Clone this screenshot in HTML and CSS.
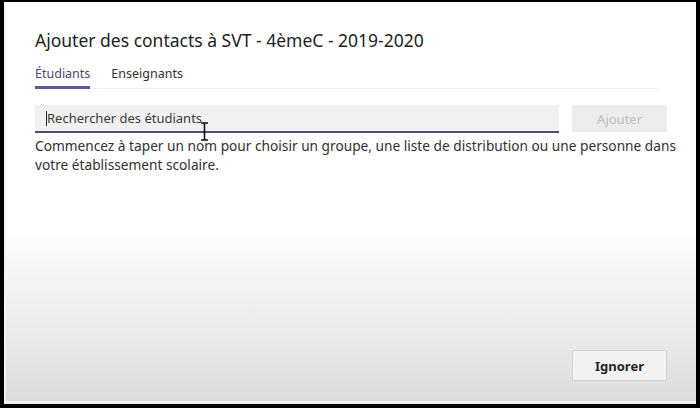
FILE: index.html
```html
<!DOCTYPE html>
<html lang="fr">
<head>
    <meta charset="UTF-8">
    <title>Ajouter des contacts</title>
    <link rel="stylesheet" href="styles.css">
</head>
<body>
    <div class="frame">
        <div class="dialog">
            <h2 class="title">Ajouter des contacts à SVT - 4èmeC - 2019-2020</h2>

            <div class="tabs">
                <span class="tab active">Étudiants</span>
                <span class="tab">Enseignants</span>
            </div>

            <div class="search-row">
                <div class="search">
                    <span class="caret"></span>
                    <span class="placeholder">Rechercher des étudiants</span>
                    <svg class="ibeam" width="9" height="19" viewBox="0 0 9 19">
                        <path d="M1 1h3l0.5 0.5L5 1h3M4.5 1.5v16M1 18h3l0.5-0.5L5 18h3" fill="none" stroke="#111" stroke-width="1.6"/>
                    </svg>
                </div>
                <button class="add" disabled>Ajouter</button>
            </div>

            <p class="hint">Commencez à taper un nom pour choisir un groupe, une liste de distribution ou une personne dans votre établissement scolaire.</p>

            <div class="footer">
                <button class="ignore">Ignorer</button>
            </div>
        </div>
    </div>
</body>
</html>
```

FILE: styles.css
```css
html, body {
    margin: 0;
    padding: 0;
    width: 700px;
    height: 408px;
    overflow: hidden;
    background-color: #000;
}

body {
    font-family: "Noto Sans", "Open Sans", sans-serif;
    color: #252423;
}

.frame {
    box-sizing: border-box;
    width: 700px;
    height: 408px;
    padding: 2px 4px 4px 4px;
}

.dialog {
    box-sizing: border-box;
    height: 100%;
    padding: 26px 29px 0 29px;
    display: flex;
    flex-direction: column;
    background: linear-gradient(to bottom, #ffffff 0%, #ffffff 56%, #f1f1f1 75%, #dcdcdc 100%);
    border-left: 2px solid #f4f4f4;
    border-bottom: 3px solid #f2f2f2;
}

.title {
    margin: 0;
    font-size: 17.5px;
    font-weight: 400;
    line-height: 24px;
    color: #201f1e;
}

.tabs {
    display: flex;
    gap: 21px;
    margin-top: 12px;
    border-bottom: 1px solid #f0f0f0;
    margin-right: 8px;
}

.tab {
    font-size: 12.5px;
    line-height: 20px;
    padding-bottom: 2px;
    color: #323130;
    border-bottom: 3px solid transparent;
    margin-bottom: -1px;
}

.tab.active {
    color: #464775;
    border-bottom-color: #5b5c97;
}

.search-row {
    display: flex;
    gap: 13px;
    margin-top: 16px;
}

.search {
    position: relative;
    width: 525px;
    height: 28px;
    box-sizing: border-box;
    background-color: #f1f1f1;
    border-bottom: 2px solid #4e4d72;
    display: flex;
    align-items: center;
    padding-left: 11px;
}

.caret {
    width: 1px;
    height: 15px;
    background-color: #222;
}

.placeholder {
    font-size: 13px;
    color: #3b3a39;
}

.ibeam {
    position: absolute;
    left: 165px;
    top: 17px;
}

.add {
    width: 95px;
    height: 27px;
    border: none;
    background-color: #ececec;
    color: #bcbcbc;
    font-family: inherit;
    font-size: 13px;
    padding: 0;
}

.hint {
    margin: 3px -18px 0 0;
    font-size: 13.7px;
    line-height: 19px;
    color: #323130;
}

.footer {
    margin-top: auto;
    display: flex;
    justify-content: flex-end;
    padding-bottom: 20px;
}

.ignore {
    width: 95px;
    height: 31px;
    border: 1px solid #cfcfcf;
    border-radius: 2px;
    background-color: #f3f3f3;
    color: #252423;
    font-family: inherit;
    font-size: 13px;
    font-weight: 700;
    padding: 0;
}
```
